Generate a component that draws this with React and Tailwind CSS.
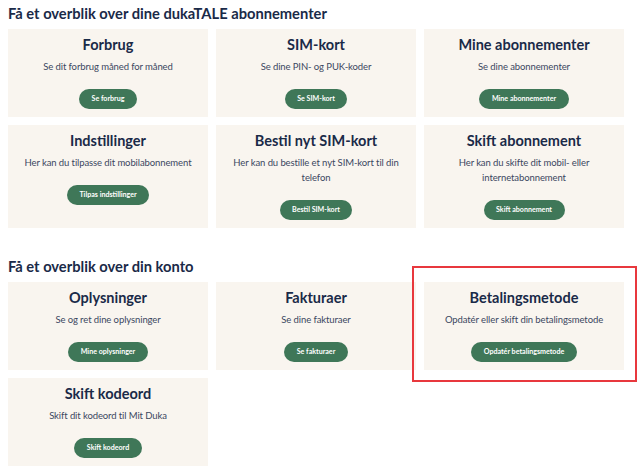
import React from "react";

const subscription = [
  { title: "Forbrug", text: "Se dit forbrug måned for måned", button: "Se forbrug" },
  { title: "SIM-kort", text: "Se dine PIN- og PUK-koder", button: "Se SIM-kort" },
  { title: "Mine abonnementer", text: "Se dine abonnementer", button: "Mine abonnementer" },
  { title: "Indstillinger", text: "Her kan du tilpasse dit mobilabonnement", button: "Tilpas indstillinger" },
  { title: "Bestil nyt SIM-kort", text: "Her kan du bestille et nyt SIM-kort til din telefon", button: "Bestil SIM-kort" },
  { title: "Skift abonnement", text: "Her kan du skifte dit mobil- eller internetabonnement", button: "Skift abonnement" },
];

const account = [
  { title: "Oplysninger", text: "Se og ret dine oplysninger", button: "Mine oplysninger" },
  { title: "Fakturaer", text: "Se dine fakturaer", button: "Se fakturaer" },
  { title: "Betalingsmetode", text: "Opdatér eller skift din betalingsmetode", button: "Opdatér betalingsmetode", marked: true },
  { title: "Skift kodeord", text: "Skift dit kodeord til Mit Duka", button: "Skift kodeord" },
];

function Card({ item }) {
  return (
    <div className="relative flex flex-col items-center bg-[#f9f5ef] px-[14px] pt-[6px] pb-[8px] text-center">
      <h3 className="text-[14.5px] font-bold leading-[20px] text-[#1a2a48]">{item.title}</h3>
      <p className="mt-[4px] text-[9.5px] leading-[15px] tracking-[-0.1px] text-[#3b475f]">{item.text}</p>
      <a
        href="#"
        className="mt-[15px] flex h-[20px] items-center rounded-full bg-[#3f7758] px-[12.5px] text-[7.1px] font-bold text-white"
      >
        {item.button}
      </a>
      {item.marked && (
        <div className="pointer-events-none absolute -top-[16px] -right-[13px] -bottom-[12px] -left-[12px] border-2 border-[#e8383d]" />
      )}
    </div>
  );
}

function Section({ title, items, className = "" }) {
  return (
    <section className={className}>
      <h2 className="h-[29px] pt-[3px] text-[14.7px] font-bold leading-[20px] text-[#1a2a48]">{title}</h2>
      <div className="grid grid-cols-3 gap-2">
        {items.map((item) => (
          <Card key={item.title} item={item} />
        ))}
      </div>
    </section>
  );
}

export default function App() {
  return (
    <div className="h-[472px] w-[640px] overflow-hidden bg-white pl-2 pr-4 font-['Lato',sans-serif]">
      <Section title="Få et overblik over dine dukaTALE abonnementer" items={subscription} />
      <Section title="Få et overblik over din konto" items={account} className="mt-[25px]" />
    </div>
  );
}
